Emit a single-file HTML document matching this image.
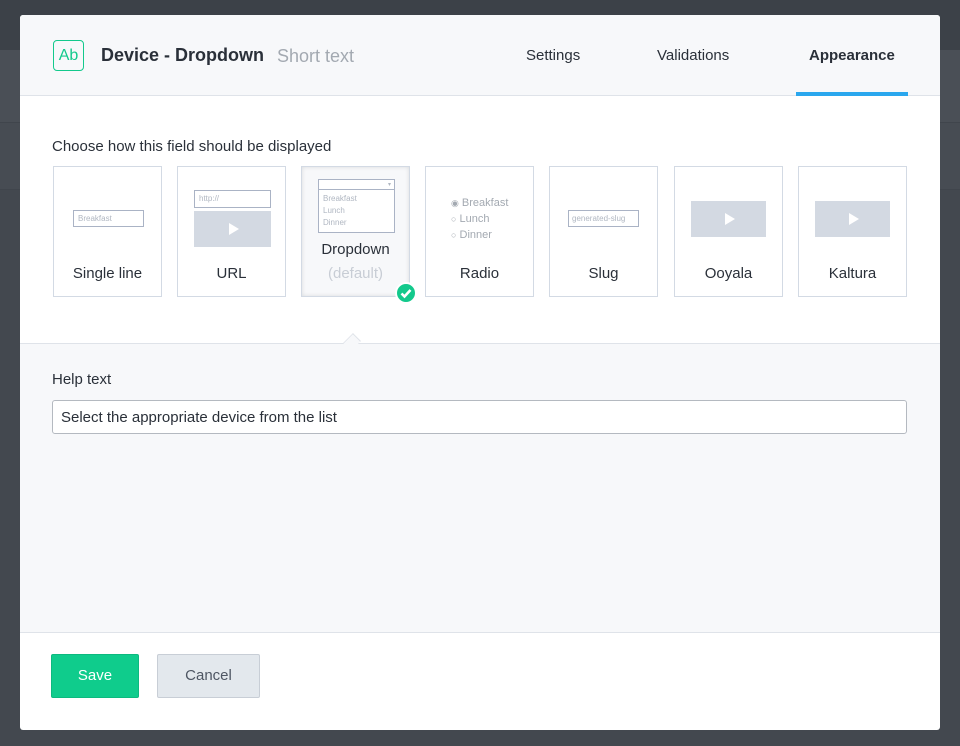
<!DOCTYPE html>
<html><head><meta charset="utf-8"><style>
*{box-sizing:border-box;margin:0;padding:0}
body{width:960px;height:746px;background:#43484f;font-family:"Liberation Sans",sans-serif;position:relative;overflow:hidden}
.bg1{position:absolute;left:0;top:0;width:960px;height:50px;background:#3c4148}
.bg2{position:absolute;left:0;top:50px;width:960px;height:72px;background:#4a4f56}
.bg3{position:absolute;left:0;top:122px;width:960px;height:68px;background:#474c53;border-top:1px solid #40454c;border-bottom:1px solid #40454c}
.modal{position:absolute;left:20px;top:15px;width:920px;height:715px;background:#fff;border-radius:3px;overflow:hidden}
.hdr{position:absolute;left:0;top:0;width:920px;height:81px;background:#f7f8fa;border-bottom:1px solid #dfe3e9}
.ab{position:absolute;left:33px;top:25px;width:31px;height:31px;border:1.5px solid #13c98c;border-radius:4px;color:#13c98c;font-size:16px;text-align:center;line-height:29px}
.title{position:absolute;left:81px;top:30px;font-size:18px;font-weight:bold;color:#2a3039}
.sub{position:absolute;left:257px;top:31px;font-size:18px;color:#a3a9b1}
.tab{position:absolute;top:32px;font-size:15px;color:#2a3039}
.tabline{position:absolute;left:776px;top:77px;width:112px;height:4px;background:#2aa7ee}
.lbl{position:absolute;font-size:15px;color:#2a3039}
.card{position:absolute;top:151px;width:109px;height:131px;border:1px solid #d3dae4;background:#fff}
.card .n{position:absolute;left:0;right:0;top:98px;text-align:center;font-size:15px;color:#2a3039}
.card.sel{background:#f7f8fa;box-shadow:inset 0 0 4px rgba(0,0,0,.12)}
.box{position:absolute;border:1px solid #aab3c5;font-size:8px;color:#b0b7c2;padding-left:4px;background:#fff}
.vid{position:absolute;background:#d3d9e2}
.vid:after{content:"";position:absolute;left:50%;top:50%;margin-left:-4px;margin-top:-6px;border-left:10px solid #fff;border-top:6px solid transparent;border-bottom:6px solid transparent}
.gray{position:absolute;left:0;top:328px;width:920px;height:290px;background:#f7f8fa;border-top:1px solid #dfe3e9;border-bottom:1px solid #dfe3e9}
.inp{position:absolute;left:32px;top:56px;width:855px;height:34px;border:1px solid #b4b9c0;border-radius:3px;background:#fff;font-size:15px;color:#2a3039;padding:8px 8px}
.btn{position:absolute;top:639px;height:44px;border-radius:2px;font-size:15px;text-align:center;line-height:42px}
</style></head><body>
<div class="bg1"></div><div class="bg2"></div><div class="bg3"></div>
<div class="modal">
 <div class="hdr">
  <div class="ab">Ab</div>
  <div class="title">Device - Dropdown</div>
  <div class="sub">Short text</div>
  <div class="tab" style="left:506px">Settings</div>
  <div class="tab" style="left:637px">Validations</div>
  <div class="tab" style="left:789px;font-weight:bold">Appearance</div>
  <div class="tabline"></div>
 </div>
 <div class="lbl" style="left:32px;top:123px">Choose how this field should be displayed</div>

 <div class="card" style="left:33px"><div class="box" style="left:19px;top:43px;width:71px;height:17px;line-height:15px">Breakfast</div><div class="n">Single line</div></div>
 <div class="card" style="left:157px"><div class="box" style="left:16px;top:23px;width:77px;height:18px;line-height:16px">http://</div><div class="vid" style="left:16px;top:44px;width:77px;height:36px"></div><div class="n">URL</div></div>
 <div class="card sel" style="left:281px"><div class="box" style="left:16px;top:12px;width:77px;height:54px;line-height:12px;padding-top:13px">Breakfast<br>Lunch<br>Dinner<div style="position:absolute;left:0;top:0;right:0;height:10px;border-bottom:1px solid #aab3c5;font-size:6px;text-align:right;padding-right:3px;line-height:10px">▾</div></div><div class="n" style="top:74px">Dropdown</div><div class="n" style="color:#c8cdd5">(default)</div>
  <div style="position:absolute;left:93px;top:115px;width:22px;height:22px;border-radius:50%;background:#13c98c;border:2px solid #fff"><svg width="18" height="18" viewBox="0 0 18 18"><path d="M4.5 9.5l3 3 6-6.5" stroke="#fff" stroke-width="2.6" fill="none"/></svg></div></div>
 <div class="card" style="left:405px"><div style="position:absolute;left:25px;top:28px;font-size:11px;color:#a3a9b1;line-height:16px"><span style="font-size:9px">◉</span> Breakfast<br><span style="font-size:9px">○</span> Lunch<br><span style="font-size:9px">○</span> Dinner</div><div class="n">Radio</div></div>
 <div class="card" style="left:529px"><div class="box" style="left:18px;top:43px;width:71px;height:17px;line-height:15px;padding-left:3px">generated-slug</div><div class="n">Slug</div></div>
 <div class="card" style="left:654px"><div class="vid" style="left:16px;top:34px;width:75px;height:36px"></div><div class="n">Ooyala</div></div>
 <div class="card" style="left:778px"><div class="vid" style="left:16px;top:34px;width:75px;height:36px"></div><div class="n">Kaltura</div></div>

 <div class="gray">
  <div style="position:absolute;left:325px;top:-9px;width:14px;height:14px;background:#f7f8fa;border-left:1px solid #dfe3e9;border-top:1px solid #dfe3e9;transform:rotate(45deg) scaleX(.8)"></div>
  <div class="lbl" style="left:32px;top:27px">Help text</div>
  <div class="inp">Select the appropriate device from the list</div>
 </div>
 <div class="btn" style="left:31px;width:88px;background:#0fcc8c;color:#fff;border:1px solid #0db97f">Save</div>
 <div class="btn" style="left:137px;width:103px;background:#e3e8ed;color:#4e5663;border:1px solid #c8ced6">Cancel</div>
</div>
</body></html>
